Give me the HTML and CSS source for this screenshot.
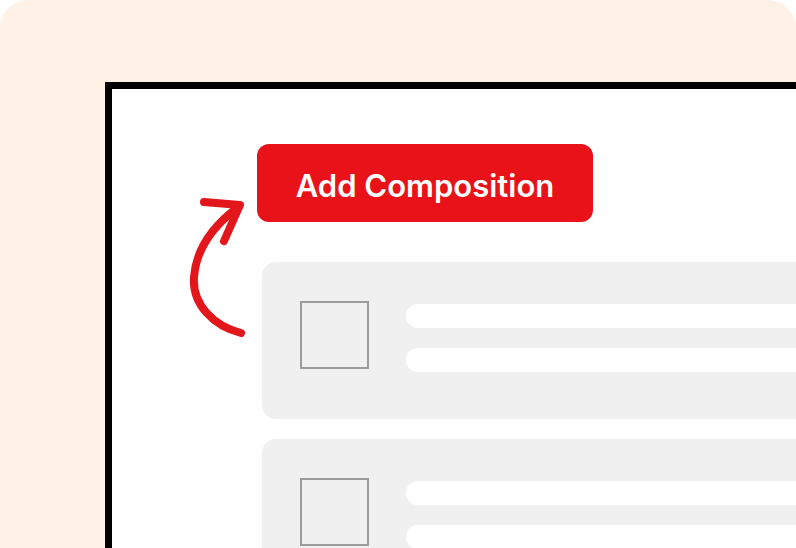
FILE: index.html
```html
<!DOCTYPE html>
<html>
<head>
<meta charset="utf-8">
<link rel="stylesheet" href="styles.css">
</head>
<body>
<div class="panel">
  <div class="frame">
    <svg class="arrow" width="80" height="150" viewBox="0 0 80 150">
      <path d="M61,138 C34,131 12,110 14,82 C16,56 32,32 57,13" fill="none" stroke="#E3161C" stroke-width="8" stroke-linecap="round"/>
      <path d="M24,7 L60,10 L44,46" fill="none" stroke="#E3161C" stroke-width="8" stroke-linecap="round" stroke-linejoin="round"/>
    </svg>
    <div class="content">
      <button class="add-btn">Add Composition</button>
      <div class="list">
        <div class="item">
          <div class="check"></div>
          <div class="lines">
            <div class="line"></div>
            <div class="line"></div>
          </div>
        </div>
        <div class="item">
          <div class="check"></div>
          <div class="lines">
            <div class="line"></div>
            <div class="line"></div>
          </div>
        </div>
      </div>
    </div>
  </div>
</div>
</body>
</html>
```
FILE: styles.css
```css
html, body {
  margin: 0;
  padding: 0;
  background: #ffffff;
  overflow: hidden;
}
.panel {
  width: 796px;
  height: 548px;
  background: #FEF1E6;
  border-radius: 28px 28px 0 0;
  padding: 82px 0 0 105px;
  box-sizing: border-box;
  overflow: hidden;
}
.frame {
  position: relative;
  width: 760px;
  height: 600px;
  background: #ffffff;
  border-left: 7px solid #000;
  border-top: 7px solid #000;
  padding: 55px 0 0 145px;
  box-sizing: border-box;
}
.arrow {
  position: absolute;
  left: 68px;
  top: 106px;
}
.content {
  display: flex;
  flex-direction: column;
}
.add-btn {
  width: 336px;
  height: 78px;
  border: none;
  border-radius: 12px;
  background: #E81218;
  color: #ffffff;
  font-family: Inter, "Noto Sans", sans-serif;
  font-weight: 600;
  font-size: 31px;
  letter-spacing: 0;
  padding: 5px 0 0 0;
  margin: 0;
  box-sizing: border-box;
}
.list {
  margin: 40px 0 0 5px;
  display: flex;
  flex-direction: column;
  gap: 20px;
}
.item {
  height: 157px;
  width: 700px;
  background: #F0F0F0;
  border-radius: 14px;
  display: flex;
  align-items: flex-start;
  padding: 39px 0 0 38px;
  box-sizing: border-box;
  gap: 37px;
}
.check {
  width: 69px;
  height: 68px;
  border: 2px solid #9B9B9B;
  box-sizing: border-box;
  flex: none;
}
.lines {
  flex: 1;
  display: flex;
  flex-direction: column;
  gap: 20px;
  padding-top: 3px;
}
.line {
  height: 24px;
  background: #ffffff;
  border-radius: 12px 0 0 12px;
}
```
